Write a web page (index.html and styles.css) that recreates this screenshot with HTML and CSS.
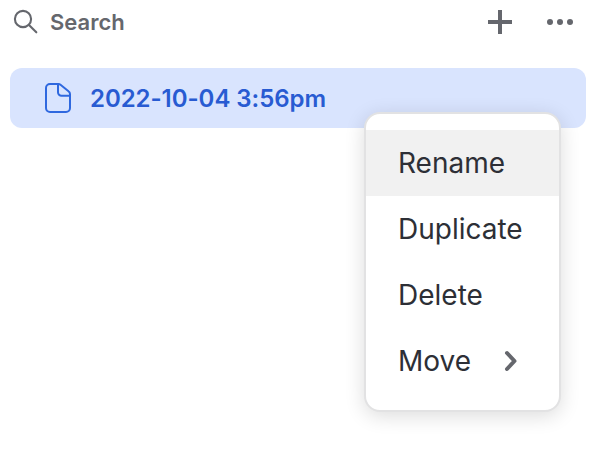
FILE: index.html
```html
<!DOCTYPE html>
<html lang="en">
<head>
<meta charset="utf-8">
<title>Files</title>
<link rel="stylesheet" href="styles.css">
</head>
<body>
<header class="toolbar">
  <svg class="search-icon" width="26" height="26" viewBox="0 0 26 26"><circle cx="10" cy="10" r="8.100"/><path d="M16 16l7.300 7.300"/></svg>
  <span class="search-label">Search</span>
  <svg class="plus-icon" width="24" height="24" viewBox="0 0 24 24"><path d="M12 0v24M0 12h24"/></svg>
  <svg class="dots-icon" width="26" height="6" viewBox="0 0 26 6"><circle cx="3" cy="3" r="3"/><circle cx="13" cy="3" r="3"/><circle cx="23" cy="3" r="3"/></svg>
</header>
<main class="file-row">
  <svg class="file-icon" width="26" height="30" viewBox="0 0 26 30"><path d="M5 1h8.500Q14.500 1 15.500 1.800L23.500 8.200Q25 9.300 25 11V25a4 4 0 0 1-4 4H5a4 4 0 0 1-4-4V5a4 4 0 0 1 4-4zM13 1v8.200a3.500 3.500 0 0 0 3.500 3.500H25"/></svg>
  <span class="file-name">2022-10-04 3:56pm</span>
  <div class="menu" role="menu">
    <div class="menu-item active" role="menuitem">Rename</div>
    <div class="menu-item" role="menuitem">Duplicate</div>
    <div class="menu-item" role="menuitem">Delete</div>
    <div class="menu-item" role="menuitem">Move <svg class="chevron" width="14" height="22" viewBox="0 0 14 22"><path d="M3 3l7.500 8L3 19"/></svg></div>
  </div>
</main>
</body>
</html>
```
FILE: styles.css
```css
* { box-sizing: border-box; }
body {
  margin: 0;
  min-height: 100vh;
  background: #fff;
  font-family: Inter, sans-serif;
}
svg { fill: none; flex: none; }
.toolbar {
  display: flex;
  align-items: center;
  height: 44px;
  padding: 0 43px 0 13px;
  color: #65676d;
}
.search-icon { stroke: currentColor; stroke-width: 2.1; stroke-linecap: round; }
.search-label {
  flex: 1;
  margin-left: 11px;
  font-size: 22px;
  font-weight: 600;
}
.plus-icon { stroke: currentColor; stroke-width: 4; }
.dots-icon { margin-left: 35px; fill: currentColor; }
.file-row {
  position: relative;
  display: flex;
  align-items: center;
  width: 576px;
  height: 60px;
  margin: 24px 0 0 10px;
  padding-left: 35px;
  border-radius: 12px;
  background: #d9e4fe;
  color: #285bd2;
}
.file-icon { stroke: #2f68df; stroke-width: 2; stroke-linejoin: round; }
.file-name {
  margin-left: 19px;
  font-size: 24px;
  font-weight: 600;
  letter-spacing: -.05px;
}
.menu {
  position: absolute;
  top: 44px;
  left: 354px;
  width: 197px;
  padding: 16px 0;
  border: 2px solid #e2e2e3;
  border-radius: 16px;
  background: #fff;
  box-shadow: 0 4px 20px rgba(0, 0, 0, .14);
}
.menu-item {
  display: flex;
  align-items: center;
  height: 66px;
  padding: 0 41px 0 32px;
  color: #2d2f36;
  font-size: 28px;
}
.menu-item.active { background: #f1f1f1; }
.chevron {
  margin-left: auto;
  stroke: #65676d;
  stroke-width: 4;
  stroke-linecap: round;
  stroke-linejoin: round;
}
```
